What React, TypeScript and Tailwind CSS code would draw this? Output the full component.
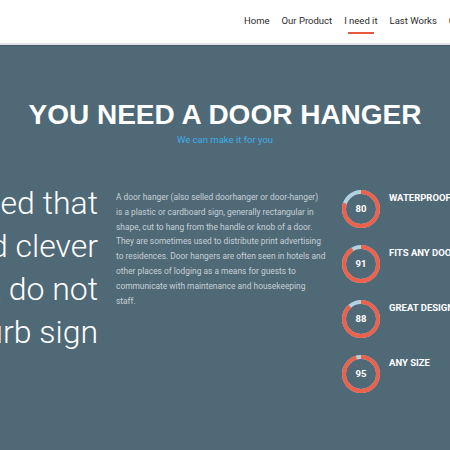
import React from 'react';

const NAV = ['Home', 'Our Product', 'I need it', 'Last Works', 'Contact'];

const SKILLS = [
  { label: 'WATERPROOF', value: 80 },
  { label: 'FITS ANY DOOR', value: 91 },
  { label: 'GREAT DESIGN', value: 88 },
  { label: 'ANY SIZE', value: 95 },
];

const LINES = ['Do you need that', 'fun and clever', 'sign that do not', 'disturb sign'];

const TEXT = [
  'A door hanger (also selled doorhanger or door-hanger)',
  'is a plastic or cardboard sign, generally rectangular in',
  'shape, cut to hang from the handle or knob of a door.',
  'They are sometimes used to distribute print advertising',
  'to residences. Door hangers are often seen in hotels and',
  'other places of lodging as a means for guests to',
  'communicate with maintenance and housekeeping',
  'staff.',
];

function Ring({ value }: { value: number }) {
  const r = 17;
  const c = 2 * Math.PI * r;
  return (
    <div className="relative w-[38px] h-[38px] shrink-0">
      <svg width="38" height="38" viewBox="0 0 38 38" className="-rotate-90">
        <circle cx="19" cy="19" r={r} fill="none" stroke="#b3d2e1" strokeWidth="4" />
        <circle
          cx="19"
          cy="19"
          r={r}
          fill="none"
          stroke="#ec614c"
          strokeWidth="4"
          strokeDasharray={`${(c * value) / 100} ${c}`}
        />
      </svg>
      <div className="absolute inset-0 flex items-center justify-center text-[9.5px] font-bold text-white">
        {value}
      </div>
    </div>
  );
}

export default function App() {
  return (
    <div className="w-[450px] h-[450px] overflow-hidden bg-[#4f6977] font-['Roboto',sans-serif]">
      {/* header */}
      <header className="h-[45px] bg-white border-b-2 border-[#e6e2ec] flex items-center">
        <nav className="flex gap-3 pl-[244px] whitespace-nowrap text-[9.5px] text-[#2b2b2b]">
          {NAV.map((item) => (
            <span key={item} className="relative">
              {item}
              {item === 'I need it' && (
                <span className="absolute left-1 right-1 -bottom-[5px] h-[2px] bg-[#e9573f]" />
              )}
            </span>
          ))}
        </nav>
      </header>

      <main className="border-t border-[#415866] pt-[55px]">
        <h1 className="text-center text-white font-bold text-[28px] leading-[28px] font-['Liberation_Sans',sans-serif]">
          YOU NEED A DOOR HANGER
        </h1>
        <p className="mt-[4px] text-center text-[9.5px] leading-[14px] text-[#40aee6]">We can make it for you</p>

        <div className="mt-[35px] flex items-start">
          <div className="w-[98px] shrink-0 flex flex-col items-end whitespace-nowrap text-[32px] leading-[43px] font-light text-white">
            {LINES.map((l) => (
              <span key={l}>{l}</span>
            ))}
          </div>

          <p className="ml-[18px] w-[214px] shrink-0 pt-[8px] whitespace-nowrap text-[8.4px] leading-[14.8px] text-[#c8d0d5]">
            {TEXT.map((t, i) => (
              <React.Fragment key={i}>
                {t}
                {i < TEXT.length - 1 && <br />}
              </React.Fragment>
            ))}
          </p>

          <div className="ml-[12px] pt-[8px] flex flex-col gap-[17px]">
            {SKILLS.map((s) => (
              <div key={s.label} className="flex items-start gap-[9px]">
                <Ring value={s.value} />
                <span className="pt-[1px] whitespace-nowrap text-[9.5px] font-bold text-white">{s.label}</span>
              </div>
            ))}
          </div>
        </div>
      </main>
    </div>
  );
}
